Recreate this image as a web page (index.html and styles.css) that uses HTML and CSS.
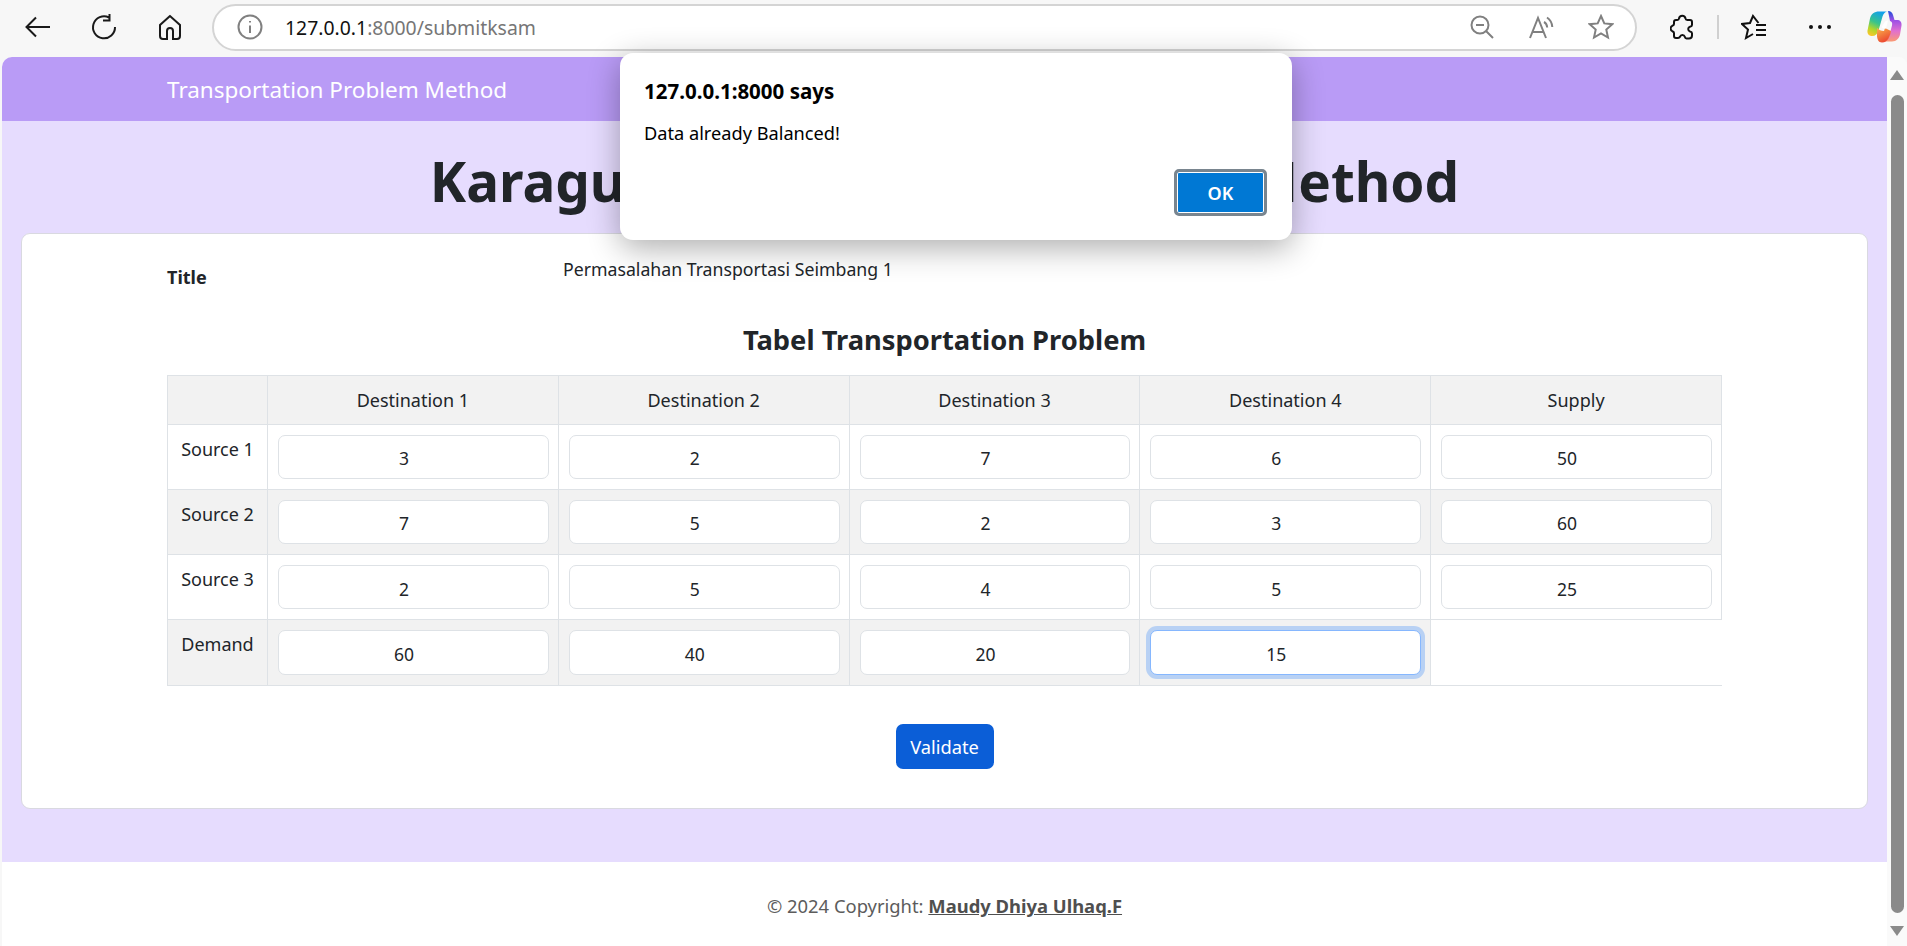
FILE: index.html
```html
<!DOCTYPE html>
<html lang="en">
<head>
  <meta charset="UTF-8">
  <title>Transportation Problem Method</title>
  <link rel="stylesheet" href="styles.css">
</head>
<body>
  <!-- browser toolbar -->
  <div class="toolbar">
    <span class="tool">
      <svg width="28" height="28" viewBox="0 0 28 28" class="ic"><path d="M26 14H3M12 4.500 2.500 14l9.500 9.500"/></svg>
    </span>
    <span class="tool">
      <svg width="28" height="28" viewBox="0 0 28 28" class="ic"><path d="M19 4.500A11 11 0 1 0 25 14M19.500 1v6.500H13"/></svg>
    </span>
    <span class="tool">
      <svg width="26" height="28" viewBox="0 0 26 28" class="ic"><path d="M13 3 3 12v11a3 3 0 0 0 3 3h4v-8a3 3 0 0 1 6 0v8h4a3 3 0 0 0 3-3V12z"/></svg>
    </span>
    <div class="address">
      <svg width="26" height="26" viewBox="0 0 26 26" class="ic grey"><circle cx="13" cy="13" r="11.500"/><path d="M13 11.500V19M13 7v1.500"/></svg>
      <span class="url">127.0.0.1<span class="url-rest">:8000/submitksam</span></span>
      <span class="addr-icons">
        <svg width="24" height="24" viewBox="0 0 24 24" class="ic grey"><circle cx="10" cy="10" r="8.500"/><path d="M6 10h8M16 16l7 7"/></svg>
        <svg width="26" height="24" viewBox="0 0 26 24" class="ic grey"><path d="M2 23 10 3l8 20M5 17h10M16 7c2 1 3 3 3.200 5.500M19 2.500c3 2 5 5 5.300 9.500"/></svg>
        <svg width="26" height="26" viewBox="0 0 26 26" class="ic grey"><path d="m13 2 3.300 7.400 8 .8-6 5.400 1.700 7.900-7-4-7 4 1.700-7.900-6-5.400 8-.8z"/></svg>
      </span>
    </div>
    <span class="tool tool-ext">
      <svg width="24" height="26" viewBox="0 0 24 26" class="ic dark"><path d="M9 4.500a3.300 3.300 0 0 1 6.500 0c.1 1 .8 1.500 1.800 1.500H20a2 2 0 0 1 2 2v3c0 1-1 1.500-2 1.700a2.500 2.500 0 0 0 0 4.800c1 .2 2 .7 2 1.700v2.300a3 3 0 0 1-3 3h-2.500c-1 0-1.500-.8-1.700-1.700a2.500 2.500 0 0 0-4.800 0C9.800 23.200 9 24 8 24H6a2 2 0 0 1-2-2v-3c0-1-.8-1.500-1.700-1.800a3 3 0 0 1 0-5.400C3.200 11.500 4 11 4 10V8a2 2 0 0 1 2-2h1.300C8.200 6 8.900 5.500 9 4.500z"/></svg>
    </span>
    <span class="tool-sep"></span>
    <span class="tool tool-fav">
      <svg width="26" height="26" viewBox="0 0 26 26" class="ic dark"><path d="M17.500 9 12 2 9 9l-8 1 6 5.500L5 24l7-4M15 11h10M15 16h10M15 21h10"/></svg>
    </span>
    <span class="tool tool-more">
      <span class="dot"></span><span class="dot"></span><span class="dot"></span>
    </span>
    <span class="tool tool-copilot">
      <svg width="36" height="34" viewBox="0 0 36 34">
        <defs>
          <linearGradient id="cpA" x1="0.600" y1="0" x2="0.200" y2="1">
            <stop offset="0" stop-color="#12a0ec"/>
            <stop offset="0.450" stop-color="#38c48c"/>
            <stop offset="0.750" stop-color="#b4d62a"/>
            <stop offset="1" stop-color="#fbc62a"/>
          </linearGradient>
          <linearGradient id="cpB" x1="0.500" y1="0" x2="0.500" y2="1">
            <stop offset="0" stop-color="#1d4fd8"/>
            <stop offset="0.300" stop-color="#9a4fe6"/>
            <stop offset="0.650" stop-color="#e06fd0"/>
            <stop offset="1" stop-color="#fb9a72"/>
          </linearGradient>
          <linearGradient id="cpC" x1="0" y1="0" x2="0.500" y2="1">
            <stop offset="0" stop-color="#f9b44a"/>
            <stop offset="1" stop-color="#ec4630"/>
          </linearGradient>
        </defs>
        <path fill="url(#cpA)" d="M13 1.500h9c-3 0-4.500 2-5.500 5l-4 14c-1 3.500-3 5.500-6.500 5.500-3 0-5-2.200-4.500-5.500l2.500-12C5 4 8.500 1.500 13 1.500z"/>
        <path fill="url(#cpB)" d="M22 1c3 0 4.500 2 5 4l1.500 5h2.500c3 0 5 2 4.500 5.500l-1.500 9c-.6 3.500-3.500 7-8 7H17c3 0 5-2 6-5l3-11c.7-3-.5-4-2-4.500z"/>
        <path fill="url(#cpC)" d="M11 18c2 2 4 3 7 3l1-3 6 3c-1 5-3 11.500-9 11.500-3.500 0-4.500-3-5-6z"/>
        <path fill="#fff" d="M15.500 17c1 1 2.500 1.500 4.500 1.500l2-8c-1.500 0-3 .5-3.500 2z"/>
      </svg>
    </span>
  </div>

  <div class="viewport">
    <div class="page">
      <div class="navbar"><span class="brand">Transportation Problem Method</span></div>
      <main class="main">
        <h1 class="main-title">Karagul-Sahin Approximation Method</h1>
        <div class="card">
          <div class="title-row">
            <span class="title-label">Title</span>
            <span class="title-value">Permasalahan Transportasi Seimbang 1</span>
          </div>
          <h2 class="table-title">Tabel Transportation Problem</h2>
          <table class="tp-table">
            <tr class="shade">
              <th class="head-first"></th>
              <th>Destination 1</th>
              <th>Destination 2</th>
              <th>Destination 3</th>
              <th>Destination 4</th>
              <th>Supply</th>
            </tr>
            <tr>
              <td class="row-name">Source 1</td>
              <td><input class="cell-input" type="number" value="3"></td>
              <td><input class="cell-input" type="number" value="2"></td>
              <td><input class="cell-input" type="number" value="7"></td>
              <td><input class="cell-input" type="number" value="6"></td>
              <td><input class="cell-input" type="number" value="50"></td>
            </tr>
            <tr class="shade">
              <td class="row-name">Source 2</td>
              <td><input class="cell-input" type="number" value="7"></td>
              <td><input class="cell-input" type="number" value="5"></td>
              <td><input class="cell-input" type="number" value="2"></td>
              <td><input class="cell-input" type="number" value="3"></td>
              <td class="plain"><input class="cell-input" type="number" value="60"></td>
            </tr>
            <tr>
              <td class="row-name">Source 3</td>
              <td><input class="cell-input" type="number" value="2"></td>
              <td><input class="cell-input" type="number" value="5"></td>
              <td><input class="cell-input" type="number" value="4"></td>
              <td><input class="cell-input" type="number" value="5"></td>
              <td><input class="cell-input" type="number" value="25"></td>
            </tr>
            <tr class="shade">
              <td class="row-name">Demand</td>
              <td><input class="cell-input" type="number" value="60"></td>
              <td><input class="cell-input" type="number" value="40"></td>
              <td><input class="cell-input" type="number" value="20"></td>
              <td><input class="cell-input is-focus" type="number" value="15"></td>
              <td class="empty"></td>
            </tr>
          </table>
          <div class="actions"><button class="btn-validate">Validate</button></div>
        </div>
      </main>
      <footer class="footer">© 2024 Copyright: <a class="footer-link" href="#">Maudy Dhiya Ulhaq.F</a></footer>
    </div>
    <div class="scrollbar">
      <span class="arrow-up"></span>
      <span class="thumb"></span>
      <span class="arrow-down"></span>
    </div>
  </div>

  <!-- alert box -->
  <div class="dialog">
    <div class="dialog-head">127.0.0.1:8000 says</div>
    <div class="dialog-text">Data already Balanced!</div>
    <div class="dialog-foot"><button class="dialog-ok">OK</button></div>
  </div>
</body>
</html>
```

FILE: styles.css
```css
*{
  box-sizing: border-box;
}
html,body{
  margin: 0;
  padding: 0;
  height: 100%;
  overflow: hidden;
}
body{
  display: flex;
  flex-direction: column;
  background: #f7f7f7;
  color: #212529;
  font-family: "Noto Sans", "Open Sans", sans-serif;
  font-size: 16px;
}

/* toolbar */
.toolbar{
  display: flex;
  align-items: center;
  flex: 0 0 57px;
  height: 57px;
  padding: 0 0 3px 5px;
}
.tool{
  display: flex;
  align-items: center;
  justify-content: center;
  flex: 0 0 66px;
  height: 40px;
}
.ic{
  fill: none;
  stroke: #1a1a1a;
  stroke-width: 2;
}
.ic.grey{
  stroke: #808080;
}
.ic.dark{
  stroke: #111;
}
.address{
  display: flex;
  align-items: center;
  flex: 0 0 1425px;
  height: 47px;
  margin-left: 9px;
  padding: 0 21px 0 23px;
  background: #fff;
  border: 2px solid #d4d4d4;
  border-radius: 24px;
}
.url{
  margin-left: 22px;
  font-size: 19.400px;
  color: #111;
  white-space: nowrap;
}
.url-rest{
  color: #767676;
}
.addr-icons{
  display: flex;
  align-items: center;
  gap: 34px;
  margin-left: auto;
}
.tool-ext{
  flex-basis: 72px;
  margin-left: 9px;
}
.tool-sep{
  flex: 0 0 2px;
  height: 24px;
  margin-left: -1px;
  margin-right: -1px;
  background: #d0d0d0;
}
.tool-fav{
  flex-basis: 72px;
}
.tool-more{
  flex-basis: 60px;
  gap: 5px;
}
.dot{
  width: 4px;
  height: 4px;
  border-radius: 50%;
  background: #111;
}
.tool-copilot{
  flex-basis: 62px;
  padding-left: 5px;
}

/* page */
.viewport{
  display: flex;
  flex: 1;
  min-height: 0;
  padding-left: 2px;
}
.page{
  display: flex;
  flex-direction: column;
  flex: 1;
  min-width: 0;
  background: #fff;
  border-top-left-radius: 10px;
  overflow: hidden;
}
.navbar{
  flex: 0 0 64px;
  display: flex;
  align-items: center;
  padding-left: 165px;
  background: #b99bf6;
}
.brand{
  color: #fff;
  font-size: 22.500px;
}
.main{
  flex: 0 0 741px;
  padding: 0 19px;
  background: #e6dcfe;
}
.main-title{
  margin: 0;
  padding-top: 23px;
  height: 111.500px;
  text-align: center;
  font-size: 54.800px;
  line-height: 74px;
  font-weight: 700;
}
.card{
  height: 576px;
  padding: 0 145px;
  background: #fff;
  border: 1px solid #d9d9e0;
  border-radius: 9px;
}
.title-row{
  display: grid;
  grid-template-columns: 396px 1fr;
  height: 75px;
  padding-top: 23px;
}
.title-label{
  padding-top: 8px;
  font-weight: 700;
  font-size: 18px;
}
.title-value{
  font-size: 17.700px;
}
.table-title{
  margin: 0;
  height: 66px;
  padding-top: 12px;
  text-align: center;
  font-size: 27.300px;
  line-height: 38px;
  font-weight: 700;
}
.tp-table{
  width: 1555px;
  table-layout: fixed;
  border-collapse: collapse;
  font-size: 18px;
}
.tp-table th,.tp-table td{
  border: 1px solid #dee2e6;
  padding: 10px 9px 10px 10px;
  vertical-align: top;
  text-align: center;
  font-weight: 400;
}
.tp-table tr{
  height: 65.300px;
}
.tp-table tr:first-child{
  height: 49px;
}
.tp-table th{
  padding: 12px 10px 8px;
}
.head-first{
  width: 100px;
}
.shade td,.shade th{
  background: #f2f2f2;
}
.tp-table .plain{
  background: #f2f2f2;
}
.tp-table .empty{
  background: #fff;
  border-right: 0;
}
.row-name{
  line-height: 26px;
}
.tp-table .row-name{
  padding: 11px 0 9px;
}
.cell-input{
  display: block;
  width: 100%;
  height: 44.300px;
  padding: 3px 4px 0 0;
  background: #fff;
  border: 1px solid #dee2e6;
  border-radius: 7px;
  text-align: center;
  font: 17.500px "Noto Sans", "Open Sans", sans-serif;
  color: #212529;
  outline: none;
}
.is-focus{
  border-color: #86b7fe;
  box-shadow: 0 0 0 4px rgba(13,110,253,.25);
}
.actions{
  display: flex;
  justify-content: center;
  padding-top: 38px;
}
.btn-validate{
  width: 98px;
  height: 45px;
  background: #0b5ed7;
  border: 0;
  border-radius: 7px;
  color: #fff;
  font: 18.300px "Noto Sans", "Open Sans", sans-serif;
}
.footer{
  flex: 1;
  padding-top: 31px;
  text-align: center;
  font-size: 18.400px;
  color: #5c5c5c;
}
.footer-link{
  color: #4f4f4f;
  font-weight: 700;
}

/* scrollbar */
.scrollbar{
  display: flex;
  flex-direction: column;
  align-items: center;
  flex: 0 0 20px;
  background: #fafafa;
  border-top-right-radius: 8px;
}
.arrow-up{
  margin-top: 13px;
  border: 7px solid transparent;
  border-top: 0;
  border-bottom: 10px solid #8a8a8a;
}
.thumb{
  width: 13px;
  height: 818px;
  margin-top: 15px;
  background: #8a8a8a;
  border-radius: 7px;
}
.arrow-down{
  margin-top: 13px;
  border: 7px solid transparent;
  border-bottom: 0;
  border-top: 10px solid #8a8a8a;
}

/* alert box */
.dialog{
  position: absolute;
  left: 620px;
  top: 53px;
  width: 672px;
  height: 187px;
  padding: 25px 24px 0;
  background: #fff;
  border-radius: 13px;
  box-shadow: 0 8px 32px rgba(0,0,0,.32);
  color: #000;
}
.dialog-head{
  font-size: 20.500px;
  line-height: 26px;
  font-weight: 700;
}
.dialog-text{
  margin-top: 16px;
  font-size: 18.200px;
  line-height: 26px;
}
.dialog-foot{
  display: flex;
  justify-content: flex-end;
  margin-top: 23px;
  padding-right: 1px;
}
.dialog-ok{
  width: 93px;
  height: 47px;
  background: #0078d4;
  border: 3px solid #79858f;
  box-shadow: inset 0 0 0 1px #fff;
  border-radius: 5px;
  color: #fff;
  font: 600 18px "Noto Sans", "Open Sans", sans-serif;
}
```
